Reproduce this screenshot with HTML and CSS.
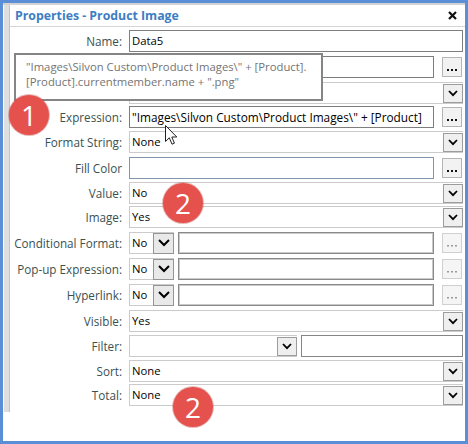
FILE: index.html
```html
<!DOCTYPE html>
<html>
<head>
<meta charset="utf-8">
<link rel="stylesheet" href="styles.css">
</head>
<body>
<div class="window">
  <div class="frame">
    <div class="main">
      <div class="strip"></div>
      <div class="content">
        <div class="header">
          <span class="title">Properties - Product Image</span>
          <svg class="close" width="9" height="9" viewBox="0 0 9 9"><path d="M1 1 L8 8 M8 1 L1 8" stroke="#111" stroke-width="2.2" fill="none"/></svg>
        </div>
        <div class="form">
          <div class="label">Name:</div>
          <div class="input">Data5</div>

          <div class="label"></div>
          <div class="ctl">
            <div class="input grow"></div>
            <div class="dots"><svg width="10" height="2" viewBox="0 0 10 2"><rect x="0" y="0" width="2" height="2"/><rect x="4" y="0" width="2" height="2"/><rect x="8" y="0" width="2" height="2"/></svg></div>
          </div>

          <div class="label"></div>
          <div class="select"><span class="val"></span><span class="arrow"><svg width="10" height="7" viewBox="0 0 10 7"><path d="M1 1 L5 5.2 L9 1" fill="none" stroke="#000" stroke-width="1.8"/></svg></span></div>

          <div class="label">Expression:</div>
          <div class="ctl">
            <div class="input grow expr">"Images\Silvon Custom\Product Images\" + [Product]</div>
            <div class="dots"><svg width="10" height="2" viewBox="0 0 10 2"><rect x="0" y="0" width="2" height="2"/><rect x="4" y="0" width="2" height="2"/><rect x="8" y="0" width="2" height="2"/></svg></div>
          </div>

          <div class="label">Format String:</div>
          <div class="select"><span class="val">None</span><span class="arrow"><svg width="10" height="7" viewBox="0 0 10 7"><path d="M1 1 L5 5.2 L9 1" fill="none" stroke="#000" stroke-width="1.8"/></svg></span></div>

          <div class="label nocolon">Fill Color</div>
          <div class="ctl">
            <div class="input grow blue"></div>
            <div class="dots"><svg width="10" height="2" viewBox="0 0 10 2"><rect x="0" y="0" width="2" height="2"/><rect x="4" y="0" width="2" height="2"/><rect x="8" y="0" width="2" height="2"/></svg></div>
          </div>

          <div class="label">Value:</div>
          <div class="select"><span class="val">No</span><span class="arrow"><svg width="10" height="7" viewBox="0 0 10 7"><path d="M1 1 L5 5.2 L9 1" fill="none" stroke="#000" stroke-width="1.8"/></svg></span></div>

          <div class="label">Image:</div>
          <div class="select"><span class="val">Yes</span><span class="arrow"><svg width="10" height="7" viewBox="0 0 10 7"><path d="M1 1 L5 5.2 L9 1" fill="none" stroke="#000" stroke-width="1.8"/></svg></span></div>

          <div class="label">Conditional Format:</div>
          <div class="ctl">
            <div class="mini"><span class="val">No</span><span class="marrow"><svg width="12" height="8" viewBox="0 0 12 8"><path d="M1 1 L6 6 L11 1" fill="none" stroke="#000" stroke-width="2"/></svg></span></div>
            <div class="input grow gray2"></div>
            <div class="dots off"><svg width="10" height="2" viewBox="0 0 10 2"><rect x="0" y="0" width="2" height="1.5"/><rect x="4" y="0" width="2" height="1.5"/><rect x="8" y="0" width="2" height="1.5"/></svg></div>
          </div>

          <div class="label">Pop-up Expression:</div>
          <div class="ctl">
            <div class="mini"><span class="val">No</span><span class="marrow"><svg width="12" height="8" viewBox="0 0 12 8"><path d="M1 1 L6 6 L11 1" fill="none" stroke="#000" stroke-width="2"/></svg></span></div>
            <div class="input grow gray2"></div>
            <div class="dots off"><svg width="10" height="2" viewBox="0 0 10 2"><rect x="0" y="0" width="2" height="1.5"/><rect x="4" y="0" width="2" height="1.5"/><rect x="8" y="0" width="2" height="1.5"/></svg></div>
          </div>

          <div class="label">Hyperlink:</div>
          <div class="ctl">
            <div class="mini"><span class="val">No</span><span class="marrow"><svg width="12" height="8" viewBox="0 0 12 8"><path d="M1 1 L6 6 L11 1" fill="none" stroke="#000" stroke-width="2"/></svg></span></div>
            <div class="input grow gray2"></div>
            <div class="dots off"><svg width="10" height="2" viewBox="0 0 10 2"><rect x="0" y="0" width="2" height="1.5"/><rect x="4" y="0" width="2" height="1.5"/><rect x="8" y="0" width="2" height="1.5"/></svg></div>
          </div>

          <div class="label">Visible:</div>
          <div class="select"><span class="val">Yes</span><span class="arrow"><svg width="10" height="7" viewBox="0 0 10 7"><path d="M1 1 L5 5.2 L9 1" fill="none" stroke="#000" stroke-width="1.8"/></svg></span></div>

          <div class="label">Filter:</div>
          <div class="ctl filter">
            <div class="select fsel"><span class="val"></span><span class="arrow"><svg width="10" height="7" viewBox="0 0 10 7"><path d="M1 1 L5 5.2 L9 1" fill="none" stroke="#000" stroke-width="1.8"/></svg></span></div>
            <div class="input grow"></div>
          </div>

          <div class="label">Sort:</div>
          <div class="select"><span class="val">None</span><span class="arrow"><svg width="10" height="7" viewBox="0 0 10 7"><path d="M1 1 L5 5.2 L9 1" fill="none" stroke="#000" stroke-width="1.8"/></svg></span></div>

          <div class="label">Total:</div>
          <div class="select"><span class="val">None</span><span class="arrow"><svg width="10" height="7" viewBox="0 0 10 7"><path d="M1 1 L5 5.2 L9 1" fill="none" stroke="#000" stroke-width="1.8"/></svg></span></div>
        </div>
      </div>
    </div>
  </div>

  <div class="tooltip">"Images\Silvon Custom\Product Images\" + [Product].<br>[Product].currentmember.name + ".png"</div>

  <div class="badge b1">1</div>
  <div class="badge b2">2</div>
  <div class="badge b3">2</div>

  <svg class="cursor" width="13" height="21" viewBox="0 0 13 21"><path d="M0.5 0.5 L0.5 16.5 L4.3 12.8 L7 19.2 L9.4 18.2 L6.8 12 L11.8 12 Z" fill="#fff" stroke="#222" stroke-width="1"/></svg>
</div>
</body>
</html>
```

FILE: styles.css
```css
* { box-sizing: border-box; }
html, body { margin: 0; padding: 0; }
body {
  width: 468px;
  height: 444px;
  background: #fff;
  font-family: "Open Sans", "Noto Sans", sans-serif;
  font-size: 11.3px;
  color: #000;
  overflow: hidden;
}
.window {
  position: relative;
  width: 468px;
  height: 444px;
  border: 3px solid #5a8fd7;
  background: #fff;
}
.frame {
  height: 100%;
  border-top: 2px solid #d3d3d3;
}
.main {
  display: flex;
  height: 407px;
}
.strip {
  width: 6px;
  margin-left: 1px;
  background: #dedede;
  border-right: 1px solid #c3c3c3;
}
.content {
  flex: 1;
  display: flex;
  flex-direction: column;
}
.header {
  height: 22px;
  border-bottom: 1px solid #d6d6d6;
  display: flex;
  align-items: center;
  justify-content: space-between;
  padding: 0 8px 1px 5px;
}
.title {
  font-weight: bold;
  font-size: 12.3px;
  color: #3d7dc2;
}
.close { display: block; }
.form {
  display: grid;
  grid-template-columns: 112px 1fr;
  grid-template-rows: 26px 26px 24px 25px 26px 25px 24px 26px 26px 26px 26px 25px 25px 24px 22px;
  column-gap: 7px;
  padding: 3px 2px 0 0;
  align-items: start;
}
.label {
  text-align: right;
  color: #3a5151;
  font-size: 11.7px;
  line-height: 22px;
  height: 22px;
  white-space: nowrap;
}
.input {
  height: 22px;
  border: 1px solid #7e7e7e;
  padding-left: 2px;
  line-height: 20px;
  white-space: nowrap;
  overflow: hidden;
}
.input.blue { border-color: #8095ae; }
.input.gray2 { border: 1px solid #8a8a8a; box-shadow: inset 0 0 0 1px #c9c9c9; }
.expr { font-size: 11.8px; padding-left: 2px; }
.ctl {
  display: flex;
  align-items: flex-start;
  height: 22px;
}
.grow { flex: 1; min-width: 0; }
.dots {
  width: 20px;
  height: 20px;
  margin: 1px 1px 0 8px;
  border: 1px solid #b5b5b5;
  background: #f2f2f2;
  display: flex;
  justify-content: center;
  align-items: flex-end;
  padding-bottom: 5px;
}
.dots svg { display: block; fill: #111; }
.dots.off { border-color: #d0d0d0; background: #f5f5f5; }
.dots.off svg { fill: #9a9a9a; }
.select {
  height: 22px;
  border: 1px solid #cbcbcb;
  border-right: none;
  display: flex;
  align-items: center;
  justify-content: space-between;
  padding-left: 2px;
}
.val { line-height: 20px; }
.arrow {
  width: 20px;
  height: 19px;
  border: 1px solid #9c9c9c;
  background: #efefef;
  display: flex;
  align-items: center;
  justify-content: center;
}
.arrow svg { display: block; }
.mini {
  width: 45px;
  height: 22px;
  border: 1px solid #cbcbcb;
  border-right: none;
  display: flex;
  align-items: center;
  justify-content: space-between;
  padding-left: 2px;
  margin-right: 4px;
}
.marrow {
  width: 21px;
  height: 21px;
  border: 1px solid #959595;
  background: #e9e9e9;
  display: flex;
  align-items: center;
  justify-content: center;
}
.marrow svg { display: block; }
.filter .fsel { width: 168px; margin-right: 4px; }
.filter .input { border-color: #858585; }

.tooltip {
  position: absolute;
  left: 11px;
  top: 50px;
  width: 309px;
  height: 48px;
  border: 2px solid #858585;
  background: #fff;
  color: #747474;
  padding: 4px 0 0 10px;
  line-height: 15px;
  white-space: nowrap;
}
.badge {
  position: absolute;
  width: 40px;
  height: 40px;
  border-radius: 50%;
  background: #e5524e;
  box-shadow: 0 0 0 1px rgba(190, 60, 60, 0.35);
  color: #fff;
  font-size: 28px;
  line-height: 40px;
  text-align: center;
}
.b1 { left: 6px; top: 92px; }
.b2 { left: 160px; top: 180px; }
.b3 { left: 170px; top: 384px; }
.cursor {
  position: absolute;
  left: 162px;
  top: 122px;
}
```
